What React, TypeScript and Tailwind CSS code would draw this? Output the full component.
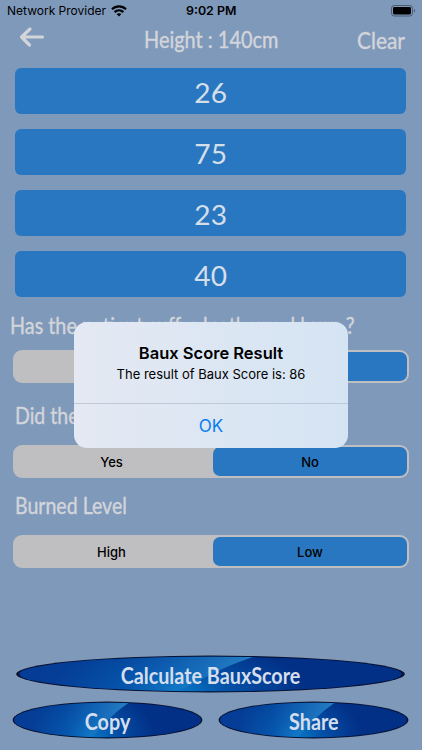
import { ReactNode } from 'react';

function Hand({ children, className = '' }: { children: ReactNode; className?: string }) {
  return (
    <span className={`inline-block whitespace-nowrap font-['Lato',sans-serif] [-webkit-text-stroke:0.4px] ${className}`}>
      {children}
    </span>
  );
}

function Segment({ left, right }: { left?: string; right?: string }) {
  return (
    <div className="flex h-[33px] w-[396px] rounded-[9px] bg-[#bfbfc1] p-[2px] text-[13px] font-medium text-black">
      <div className="flex w-[198px] items-center justify-center pr-[5px] pt-[2px]">{left}</div>
      <div className="flex w-[194px] items-center justify-center rounded-[7px] bg-[#2977c0] pt-[2px]">{right}</div>
    </div>
  );
}

function Oval({ id, label, width }: { id: string; label: string; width: number }) {
  return (
    <button className="relative flex h-[38px] items-center justify-center" style={{ width }}>
      <svg className="absolute inset-0" width={width} height={38} viewBox="0 0 200 38" preserveAspectRatio="none">
        <defs>
          <radialGradient id={`${id}-glow`} gradientUnits="userSpaceOnUse" cx="84" cy="36" r="65" gradientTransform="translate(0 9) scale(1 .75)">
            <stop offset="0" stopColor="#0877c4" />
            <stop offset="0.4" stopColor="#0450a6" />
            <stop offset="1" stopColor="#023087" />
          </radialGradient>
          <linearGradient id={`${id}-shine`} x1="0" x2="1" y1="0" y2="0">
            <stop offset="0" stopColor="#0a50b0" stopOpacity="0.35" />
            <stop offset="0.45" stopColor="#0a60b8" stopOpacity="0.35" />
            <stop offset="1" stopColor="#3aa5e0" stopOpacity="0.7" />
          </linearGradient>
          <clipPath id={`${id}-clip`}>
            <ellipse cx="100" cy="19" rx="97.8" ry="17.3" />
          </clipPath>
        </defs>
        <ellipse cx="100" cy="19" rx="100" ry="18.9" fill="#8d98ab" />
        <ellipse cx="100" cy="19" rx="99.4" ry="18.4" fill="#04143a" />
        <g clipPath={`url(#${id}-clip)`}>
          <rect width="200" height="38" fill={`url(#${id}-glow)`} />
          <path d="M0 0H125C112 8 102 17 94 26C89 32 84 35 76 38H0Z" fill={`url(#${id}-shine)`} />
        </g>
      </svg>
      <Hand className="relative mt-[2px] scale-x-[0.86] text-[23px] leading-[30px] font-bold text-[#d5deed] [-webkit-text-stroke:0px]">{label}</Hand>
    </button>
  );
}

function StatusBar() {
  return (
    <div className="relative flex h-[22px] items-center justify-between pl-[7px] pr-[6px] text-[13px] text-black">
      <div className="flex items-center gap-[5px]">
        <span className="w-[99px] whitespace-nowrap text-[12px]">Network Provider</span>
        <svg width="16" height="12" viewBox="0 0 16 12" fill="none" stroke="black" strokeWidth="2.2">
          <path d="M1 4.2C5 .3 11 .3 15 4.2" />
          <path d="M3.6 7.1C6.1 4.8 9.9 4.8 12.4 7.1" />
          <path d="M5.6 9.1C7 7.9 9 7.9 10.4 9.1L8 11.5Z" fill="black" stroke="none" />
        </svg>
      </div>
      <span className="absolute left-[186px] text-[12.4px] font-semibold">9:02 PM</span>
      <svg width="25" height="12" viewBox="0 0 25 12">
        <rect x=".5" y=".5" width="21" height="10.5" rx="2.8" fill="none" stroke="#4a5870" />
        <rect x="2" y="2" width="18" height="7.5" rx="1.4" />
        <path d="M23 4C24.5 4.3 24.5 7.2 23 7.5Z" fill="#4a5870" />
      </svg>
    </div>
  );
}

const values = ['26', '75', '23', '40'];

export default function App() {
  return (
    <div className="relative h-[750px] w-[422px] overflow-hidden bg-[#7f99bb] font-['Inter',sans-serif] text-[#d3d5da]">
      <StatusBar />

      {/* Navigation bar */}
      <div className="flex h-[46px] items-start">
        <svg className="ml-[19px] mt-[4px] shrink-0" width="26" height="22" viewBox="0 0 26 22" fill="none" stroke="currentColor" strokeWidth="3.2" strokeLinecap="round" strokeLinejoin="round">
          <path d="M23.5 11H3M11 3L2.5 11L10.5 19" />
        </svg>
        <Hand className="ml-[99px] w-[150px] origin-left scale-x-[0.83] text-[24px] leading-[34px]">Height : 140cm</Hand>
        <Hand className="ml-[63px] origin-left scale-x-[0.87] text-[24px] leading-[35px]">Clear</Hand>
      </div>

      <div className="ml-[15px] flex flex-col gap-[15px]">
        {values.map((value) => (
          <div key={value} className="flex h-[46px] w-[391px] items-center justify-center rounded-[6px] bg-[#2977c0]">
            <Hand className="mt-[4px] scale-x-[1.04] text-[27px] leading-[46px] text-[#d5dfea] [-webkit-text-stroke:0px]">{value}</Hand>
          </div>
        ))}
      </div>

      {/* Questions */}
      <div className="ml-[13px] mt-[12px]">
        <Hand className="-ml-[3px] h-[41px] origin-left scale-x-[0.86] text-[23px] leading-[33px]">Has the patient suffer by thermal burn ?</Hand>
        <Segment />
        <Hand className="ml-[2px] mt-[16px] h-[46px] origin-left scale-x-[0.85] text-[23px] leading-[32px]">Did the</Hand>
        <Segment left="Yes" right="No" />
        <Hand className="ml-[2px] mt-[11px] h-[46px] origin-left scale-x-[0.85] text-[23px] leading-[32px]">Burned Level</Hand>
        <Segment left="High" right="Low" />
      </div>

      {/* Actions */}
      <div className="absolute left-0 top-[655px]">
        <div className="ml-[15px]">
          <Oval id="calculate" label="Calculate BauxScore" width={391} />
        </div>
        <div className="ml-[12px] mt-[8px] flex gap-[15px]">
          <Oval id="copy" label="Copy" width={191} />
          <Oval id="share" label="Share" width={191} />
        </div>
      </div>

      {/* Result alert */}
      <div className="absolute left-[74px] top-[322px] flex h-[126px] w-[274px] flex-col rounded-[13px] bg-linear-to-r from-[#e4e9f3] to-[#d5e4f3] text-center text-black">
        <div className="h-[82px] border-b border-[#bdc8d8] pt-[20px]">
          <h1 className="text-[16.5px] leading-[22px] font-semibold">Baux Score Result</h1>
          <p className="text-[13px] leading-[20px]">The result of Baux Score is: 86</p>
        </div>
        <button className="flex-1 pt-[2px] text-[17px] text-[#087cf2]">OK</button>
      </div>
    </div>
  );
}
